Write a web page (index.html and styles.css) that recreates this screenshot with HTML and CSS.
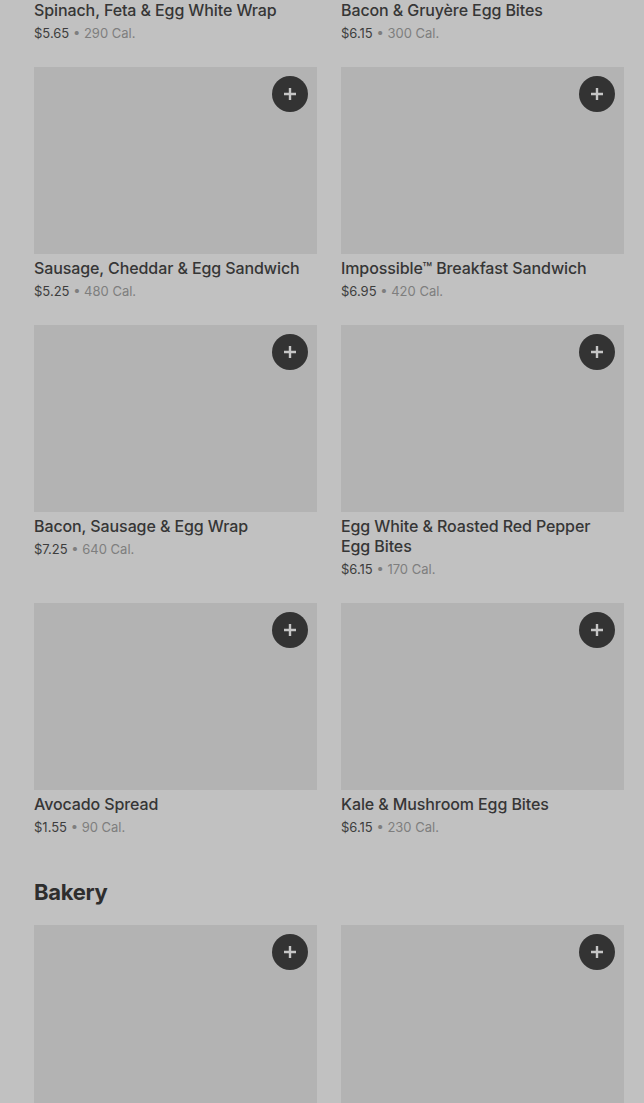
FILE: index.html
```html
<!DOCTYPE html>
<html lang="en">
<head>
    <meta charset="UTF-8">
    <meta name="viewport" content="width=device-width, initial-scale=1.0">
    <title>Menu</title>
    <link rel="stylesheet" href="styles.css">
</head>
<body>
    <div class="menu">
        <!-- Breakfast -->
        <div class="item-grid">
            <div class="item">
                <div class="item-image"><button class="add-button"><svg viewBox="0 0 12 12"><path d="M6 0v12M0 6h12"/></svg></button></div>
                <div class="item-name">Spinach, Feta &amp; Egg White Wrap</div>
                <div class="item-meta"><span class="price">$5.65</span> • 290 Cal.</div>
            </div>
            <div class="item">
                <div class="item-image"><button class="add-button"><svg viewBox="0 0 12 12"><path d="M6 0v12M0 6h12"/></svg></button></div>
                <div class="item-name">Bacon &amp; Gruyère Egg Bites</div>
                <div class="item-meta"><span class="price">$6.15</span> • 300 Cal.</div>
            </div>
            <div class="item">
                <div class="item-image"><button class="add-button"><svg viewBox="0 0 12 12"><path d="M6 0v12M0 6h12"/></svg></button></div>
                <div class="item-name">Sausage, Cheddar &amp; Egg Sandwich</div>
                <div class="item-meta"><span class="price">$5.25</span> • 480 Cal.</div>
            </div>
            <div class="item">
                <div class="item-image"><button class="add-button"><svg viewBox="0 0 12 12"><path d="M6 0v12M0 6h12"/></svg></button></div>
                <div class="item-name">Impossible™ Breakfast Sandwich</div>
                <div class="item-meta"><span class="price">$6.95</span> • 420 Cal.</div>
            </div>
            <div class="item">
                <div class="item-image"><button class="add-button"><svg viewBox="0 0 12 12"><path d="M6 0v12M0 6h12"/></svg></button></div>
                <div class="item-name">Bacon, Sausage &amp; Egg Wrap</div>
                <div class="item-meta"><span class="price">$7.25</span> • 640 Cal.</div>
            </div>
            <div class="item">
                <div class="item-image"><button class="add-button"><svg viewBox="0 0 12 12"><path d="M6 0v12M0 6h12"/></svg></button></div>
                <div class="item-name">Egg White &amp; Roasted Red Pepper Egg Bites</div>
                <div class="item-meta"><span class="price">$6.15</span> • 170 Cal.</div>
            </div>
            <div class="item">
                <div class="item-image"><button class="add-button"><svg viewBox="0 0 12 12"><path d="M6 0v12M0 6h12"/></svg></button></div>
                <div class="item-name">Avocado Spread</div>
                <div class="item-meta"><span class="price">$1.55</span> • 90 Cal.</div>
            </div>
            <div class="item">
                <div class="item-image"><button class="add-button"><svg viewBox="0 0 12 12"><path d="M6 0v12M0 6h12"/></svg></button></div>
                <div class="item-name">Kale &amp; Mushroom Egg Bites</div>
                <div class="item-meta"><span class="price">$6.15</span> • 230 Cal.</div>
            </div>
        </div>

        <!-- Bakery -->
        <h2 class="section-title">Bakery</h2>
        <div class="item-grid">
            <div class="item">
                <div class="item-image"><button class="add-button"><svg viewBox="0 0 12 12"><path d="M6 0v12M0 6h12"/></svg></button></div>
            </div>
            <div class="item">
                <div class="item-image"><button class="add-button"><svg viewBox="0 0 12 12"><path d="M6 0v12M0 6h12"/></svg></button></div>
            </div>
        </div>
    </div>
</body>
</html>
```

FILE: styles.css
```css
html, body {
    margin: 0;
    padding: 0;
    height: 100%;
    overflow: hidden; /* page is shown scrolled part-way down */
    background: #c1c1c1;
    font-family: Inter, "Noto Sans", sans-serif;
    color: #353535;
}
.menu {
    padding: 0 20px 0 34px;
    margin-top: -191px; /* first row's photo is scrolled out of view */
}
.item-grid {
    display: grid;
    grid-template-columns: 283px 283px;
    column-gap: 24px;
    row-gap: 25px;
}
.item-image {
    position: relative;
    height: 187px;
    background: #b3b3b3;
}
.add-button {
    position: absolute;
    top: 9px;
    right: 9px;
    width: 36px;
    height: 36px;
    border: none;
    border-radius: 50%;
    background: #333333;
    padding: 0;
    display: flex;
    justify-content: center;
    align-items: center;
    cursor: pointer;
}
.add-button svg {
    width: 12px;
    height: 12px;
    stroke: #c6c6c6;
    stroke-width: 2.4;
    fill: none;
}
.item-name {
    margin-top: 4px;
    padding-right: 10px;
    font-size: 16px;
    font-weight: 500;
    line-height: 20px;
    letter-spacing: -0.1px;
    color: #363636;
}
.item-meta {
    margin-top: 4px;
    font-size: 13px;
    line-height: 18px;
    color: #7e7e7e;
}
.price {
    color: #3d3d3d;
}
.section-title {
    margin: 42px 0 19px;
    font-size: 22px;
    font-weight: 700;
    line-height: 28px;
    color: #2e2e2e;
    letter-spacing: -0.3px;
}
```
